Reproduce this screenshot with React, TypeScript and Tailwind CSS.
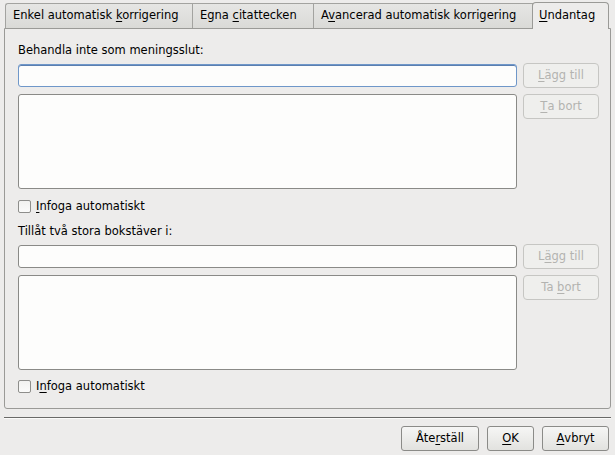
import React from "react";

const U = ({ children }: { children: React.ReactNode }) => <span className="underline underline-offset-[2px]">{children}</span>;

function Tab({ w, children }: { w: string; children: React.ReactNode }) {
  return (
    <div className={`${w} h-[25px] border-t border-l border-[#a3a3a0] bg-gradient-to-b from-[#e6e6e4] to-[#dadad7] pl-[7px] pt-[4px] leading-[15px] -ml-px first:ml-0 first:rounded-tl-[3px] whitespace-nowrap`}>
      {children}
    </div>
  );
}

function DisabledBtn({ children }: { children: React.ReactNode }) {
  return (
    <div className="h-[25px] w-[76px] rounded-[4px] border border-[#c6c6c3] bg-[#efefed] text-[#b3b3b0] flex items-center justify-center leading-[15px] whitespace-pre">
      {children}
    </div>
  );
}

function Check({ children }: { children: React.ReactNode }) {
  return (
    <div className="h-[18px] flex items-center gap-[5px]">
      <div className="w-[13px] h-[13px] rounded-[2px] border border-[#8e8e8b] bg-gradient-to-b from-[#f2f2f0] to-[#fbfbfa]" />
      <span className="leading-[15px]">{children}</span>
    </div>
  );
}

function Btn({ w, children }: { w: string; children: React.ReactNode }) {
  return (
    <div className={`${w} h-[25px] rounded-[3px] border border-[#8b8b88] bg-gradient-to-b from-[#f6f6f5] to-[#e2e2df] flex items-center justify-center leading-[15px]`}>
      {children}
    </div>
  );
}

export default function App() {
  return (
    <div
      className="w-[615px] h-[455px] bg-[#edeceb] text-black text-[11.5px] overflow-hidden flex flex-col"
      style={{ fontFamily: '"DejaVu Sans", "Liberation Sans", sans-serif' }}
    >
      <div className="h-[28px] flex items-end pl-[5px]">
        <Tab w="w-[188px]">Enkel automatisk <U>k</U>orrigering</Tab>
        <Tab w="w-[122px]">Egna <U>c</U>itattecken</Tab>
        <div className="w-[220px] h-[25px] border-t border-l border-r border-[#a3a3a0] bg-gradient-to-b from-[#e6e6e4] to-[#dadad7] pl-[7px] pt-[4px] leading-[15px] -ml-px whitespace-nowrap">
          A<U>v</U>ancerad automatisk korrigering
        </div>
        <div className="w-[77px] h-[27px] relative z-10 -mb-px -ml-px border border-b-0 border-[#9a9a97] rounded-t-[4px] bg-[#edeceb] pl-[6px] pt-[5px] leading-[15px]">
          <U>U</U>ndantag
        </div>
      </div>

      <div className="mx-[4px] w-[607px] border border-[#9a9a97] rounded-b-[3px] pl-[13px] pr-[11px] pt-[14px] pb-[13px]">
        <div className="leading-[15px]">Behandla inte som meningsslut:</div>
        <div className="mt-[5px] grid grid-cols-[1fr_76px] gap-x-[6px] gap-y-[6px]">
          <div className="h-[25px] flex items-center">
            <div className="h-[23px] w-full rounded-[3px] border border-[#6f97c9] bg-[#fdfdfc] shadow-[inset_0_1px_0_#5b7fb0]" />
          </div>
          <DisabledBtn><U>L</U>ägg till</DisabledBtn>
          <div className="h-[95px] rounded-[3px] border border-[#8a8a87] bg-[#fdfdfc]" />
          <div>
            <DisabledBtn><U>T</U>a bort</DisabledBtn>
          </div>
        </div>
        <div className="mt-[8px]">
          <Check><U>I</U>nfoga automatiskt</Check>
        </div>
        <div className="mt-[9px] leading-[15px]">Tillåt två stora bokstäver i:</div>
        <div className="mt-[5px] grid grid-cols-[1fr_76px] gap-x-[6px] gap-y-[6px]">
          <div className="h-[25px] flex items-center">
            <div className="h-[23px] w-full rounded-[3px] border border-[#8a8a87] bg-[#fdfdfc]" />
          </div>
          <DisabledBtn>L<U>ä</U>gg till</DisabledBtn>
          <div className="h-[95px] rounded-[3px] border border-[#8a8a87] bg-[#fdfdfc]" />
          <div>
            <DisabledBtn>
              <span>{"Ta\u00a0"}</span>
              <U>b</U>
              <span>ort</span>
            </DisabledBtn>
          </div>
        </div>
        <div className="mt-[7px]">
          <Check>I<U>n</U>foga automatiskt</Check>
        </div>
      </div>

      <div className="mx-[4px] mt-[8px] h-[2px] border-t border-[#6a6a68] border-b border-b-[#fbfbfa]" />

      <div className="mt-[7px] flex justify-end gap-[8px] pr-[6px]">
        <Btn w="w-[78px]">Åte<U>r</U>ställ</Btn>
        <Btn w="w-[47px]"><U>O</U>K</Btn>
        <Btn w="w-[67px]"><U>A</U>vbryt</Btn>
      </div>
    </div>
  );
}
